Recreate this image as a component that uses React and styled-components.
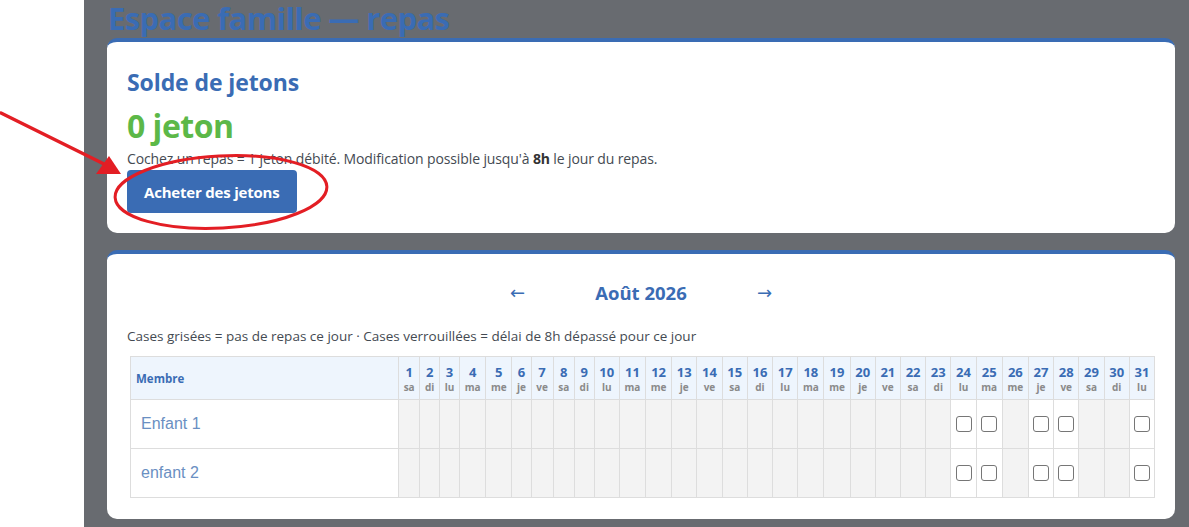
import React from "react";
import styled, { createGlobalStyle } from "styled-components";

const BLUE = "#3a6cb4";

const Global = createGlobalStyle`
  html, body { margin: 0; padding: 0; background: #ffffff; }
  body { font-family: "Open Sans", "Noto Sans", sans-serif; overflow: hidden; }
  * { box-sizing: border-box; }
`;

const Page = styled.div`
  position: relative;
  display: flex;
  width: 1189px;
  height: 527px;
  overflow: hidden;
`;

const WhiteGutter = styled.div`
  width: 84px;
  flex: none;
  background: #ffffff;
`;

const Backdrop = styled.div`
  flex: 1;
  background: #686b70;
  padding: 0 14px 0 23px;
  display: flex;
  flex-direction: column;
`;

const Title = styled.h1`
  margin: 0 0 2px 1px;
  font-size: 31px;
  line-height: 36px;
  font-weight: 700;
  color: ${BLUE};
  letter-spacing: -0.6px;
  white-space: nowrap;
`;

const Card = styled.section`
  background: #ffffff;
  border-top: 4px solid ${BLUE};
  border-radius: 10px;
  padding: ${(p) => p.$pad};
  margin-bottom: 17px;
`;

const Heading = styled.h2`
  margin: 0;
  font-size: 23px;
  line-height: 30px;
  font-weight: 700;
  color: ${BLUE};
  letter-spacing: -0.1px;
`;

const Balance = styled.div`
  margin-top: 9px;
  font-size: 32px;
  line-height: 40px;
  font-weight: 700;
  color: #5cb848;
  letter-spacing: -0.5px;
`;

const Note = styled.p`
  margin: 3px 0 0;
  font-size: 14px;
  line-height: 19px;
  color: #444a52;
  letter-spacing: -0.12px;
  b { color: #333; }
`;

const BuyButton = styled.button`
  margin-top: 2px;
  height: 43px;
  padding: 0 17px;
  border: none;
  border-radius: 4px;
  background: ${BLUE};
  color: #ffffff;
  font-family: inherit;
  font-size: 15px;
  font-weight: 700;
  letter-spacing: -0.2px;
  cursor: pointer;
`;

const MonthNav = styled.div`
  display: flex;
  justify-content: center;
  align-items: center;
  height: 36px;
`;

const NavArrow = styled.button`
  border: none;
  background: transparent;
  color: ${BLUE};
  font-family: "DejaVu Sans", sans-serif;
  font-size: 18px;
  padding: 0 12px;
  cursor: pointer;
`;

const MonthLabel = styled.div`
  min-width: 208px;
  text-align: center;
  font-size: 18.5px;
  font-weight: 700;
  color: ${BLUE};
`;

const Legend = styled.p`
  margin: 17px 0 0;
  font-size: 13.5px;
  line-height: 18px;
  color: #444a52;
`;

const TableWrap = styled.div`
  margin-top: 11px;
  padding-left: 3px;
`;

const Grid = styled.table`
  width: 100%;
  border-collapse: collapse;
`;

const MemberHead = styled.th`
  border: 1px solid #dddddd;
  background: #eef5fd;
  text-align: left;
  padding: 0 5px;
  height: 43px;
  font-size: 11.5px;
  font-weight: 700;
  color: ${BLUE};
`;

const DayHead = styled.th`
  border: 1px solid #dddddd;
  background: #eef5fd;
  width: 1%;
  white-space: nowrap;
  padding: 4px 4.68px 3px;
  text-align: center;
  line-height: 1;
`;

const DayNum = styled.div`
  font-size: 13px;
  font-weight: 700;
  color: ${BLUE};
  line-height: 17px;
`;

const DayAbbr = styled.div`
  font-size: 10px;
  font-weight: 700;
  color: #8a8a8a;
  line-height: 13px;
`;

const NameCell = styled.td`
  border: 1px solid #dddddd;
  height: 49px;
  padding: 0 10px;
  font-family: "Liberation Sans", Arial, sans-serif;
  font-size: 16px;
  color: #6a8fc2;
`;

const DayCell = styled.td`
  border: 1px solid #dddddd;
  background: ${(p) => (p.$open ? "#ffffff" : "#f3f3f3")};
  text-align: center;
  vertical-align: middle;
  padding: 0;
`;

const Check = styled.input.attrs({ type: "checkbox" })`
  appearance: none;
  display: block;
  margin: 0 auto;
  width: 16px;
  height: 16px;
  border: 1px solid #767676;
  border-radius: 3px;
  background: #ffffff;
`;

const Annotation = styled.svg`
  position: absolute;
  left: 0;
  top: 0;
  pointer-events: none;
`;

const ABBR = ["sa", "di", "lu", "ma", "me", "je", "ve"];
const OPEN_DAYS = new Set([24, 25, 27, 28, 31]);
const days = Array.from({ length: 31 }, (_, i) => ({
  n: i + 1,
  abbr: ABBR[i % 7],
  open: OPEN_DAYS.has(i + 1),
}));
const members = ["Enfant 1", "enfant 2"];

export default function App() {
  return (
    <>
      <Global />
      <Page>
        <WhiteGutter />
        <Backdrop>
          <Title>Espace famille — repas</Title>
          <Card $pad="25px 20px 20px">
            <Heading>Solde de jetons</Heading>
            <Balance>0 jeton</Balance>
            <Note>
              Cochez un repas = 1 jeton débité. Modification possible jusqu'à <b>8h</b> le jour du repas.
            </Note>
            <BuyButton>Acheter des jetons</BuyButton>
          </Card>
          <Card $pad="20px 20px 21px">
            <MonthNav>
              <NavArrow aria-label="Mois précédent">←</NavArrow>
              <MonthLabel>Août 2026</MonthLabel>
              <NavArrow aria-label="Mois suivant">→</NavArrow>
            </MonthNav>
            <Legend>
              Cases grisées = pas de repas ce jour · Cases verrouillées = délai de 8h dépassé pour ce jour
            </Legend>
            <TableWrap>
              <Grid>
                <thead>
                  <tr>
                    <MemberHead>Membre</MemberHead>
                    {days.map((d) => (
                      <DayHead key={d.n}>
                        <DayNum>{d.n}</DayNum>
                        <DayAbbr>{d.abbr}</DayAbbr>
                      </DayHead>
                    ))}
                  </tr>
                </thead>
                <tbody>
                  {members.map((m) => (
                    <tr key={m}>
                      <NameCell>{m}</NameCell>
                      {days.map((d) => (
                        <DayCell key={d.n} $open={d.open}>
                          {d.open && <Check aria-label={`${m} ${d.n}`} />}
                        </DayCell>
                      ))}
                    </tr>
                  ))}
                </tbody>
              </Grid>
            </TableWrap>
          </Card>
        </Backdrop>
        <Annotation width="1189" height="527" viewBox="0 0 1189 527">
          <line x1="1" y1="113" x2="104" y2="164" stroke="#e31e24" strokeWidth="3.5" strokeLinecap="round" />
          <polygon points="121,174 96,174 109,156" fill="#e31e24" />
          <ellipse cx="221" cy="192" rx="106" ry="36" fill="none" stroke="#e31e24" strokeWidth="3" transform="rotate(-3 221 192)" />
        </Annotation>
      </Page>
    </>
  );
}
